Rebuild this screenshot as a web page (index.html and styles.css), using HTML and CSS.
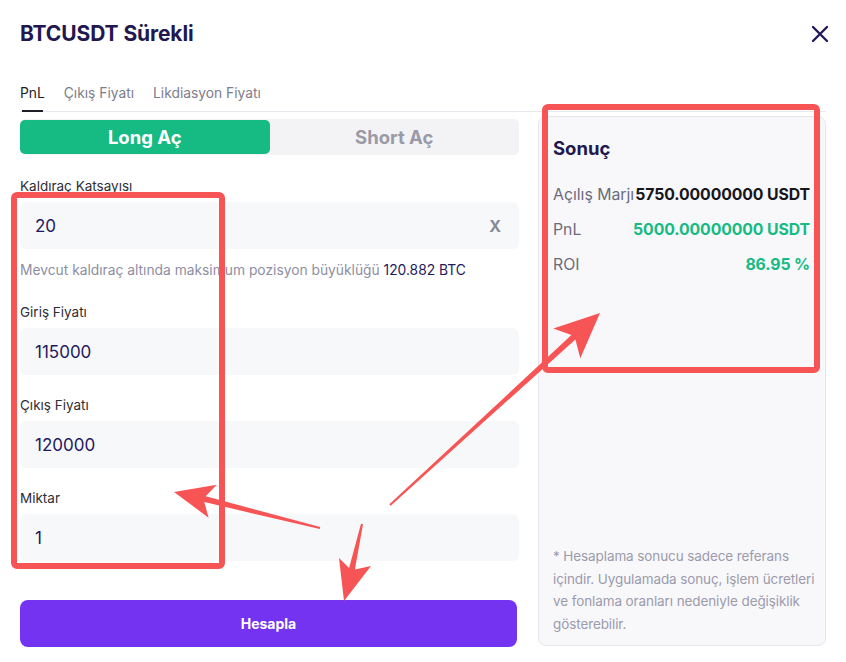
FILE: index.html
```html
<!DOCTYPE html>
<html lang="tr">
<head>
<meta charset="utf-8">
<title>BTCUSDT Sürekli</title>
<link rel="stylesheet" href="styles.css">
</head>
<body>
<div class="modal">
  <header class="head">
    <h1 class="title">BTCUSDT Sürekli</h1>
    <svg class="close" width="18" height="18" viewBox="0 0 18 18"><path d="M2 2L16 16M16 2L2 16" stroke="#23195a" stroke-width="2.4" stroke-linecap="round"/></svg>
  </header>
  <nav class="tabs">
    <span class="tab active">PnL</span>
    <span class="tab">Çıkış Fiyatı</span>
    <span class="tab">Likdiasyon Fiyatı</span>
  </nav>
  <div class="body">
    <div class="form">
      <div class="seg">
        <div class="seg-btn on">Long Aç</div>
        <div class="seg-btn">Short Aç</div>
      </div>
      <div class="label first">Kaldıraç Katsayısı</div>
      <div class="input"><span>20</span><span class="x">X</span></div>
      <div class="hint">Mevcut kaldıraç altında maksimum pozisyon büyüklüğü <span class="hint-v">120.882 BTC</span></div>
      <div class="label">Giriş Fiyatı</div>
      <div class="input"><span>115000</span></div>
      <div class="label">Çıkış Fiyatı</div>
      <div class="input"><span>120000</span></div>
      <div class="label">Miktar</div>
      <div class="input"><span>1</span></div>
      <button class="calc">Hesapla</button>
    </div>
    <aside class="result">
      <div class="r-title">Sonuç</div>
      <div class="row first"><span class="k">Açılış Marjı</span><span class="v">5750.00000000 USDT</span></div>
      <div class="row"><span class="k">PnL</span><span class="v green">5000.00000000 USDT</span></div>
      <div class="row"><span class="k">ROI</span><span class="v green">86.95 %</span></div>
      <p class="note">* Hesaplama sonucu sadece referans içindir. Uygulamada sonuç, işlem ücretleri ve fonlama oranları nedeniyle değişiklik gösterebilir.</p>
    </aside>
  </div>
</div>
<svg class="marks" width="846" height="662" viewBox="0 0 846 662">
  <rect x="14" y="195" width="208" height="371" rx="3" fill="none" stroke="#f75555" stroke-width="6"/>
  <rect x="545" y="107" width="272" height="263" rx="3" fill="none" stroke="#f75555" stroke-width="6"/>
  <polygon fill="#f75555" points="390.7,505.7 575.4,339.5 580.3,358.2 600,313 553.3,328.6 571.4,335.1 389.3,504.3"/>
  <polygon fill="#f75555" points="320.2,527 205.7,496.3 216.8,484.7 174,492 208.6,517.7 204.3,502.1 319.8,529"/>
  <polygon fill="#f75555" points="361,523.8 349.1,568.1 339,558 344,601 371,566 354.9,569.5 363,524.2"/>
</svg>
</body>
</html>
```
FILE: styles.css
```css
* { box-sizing: border-box; }
html, body { margin: 0; padding: 0; }
body {
  width: 846px;
  height: 662px;
  background: #ffffff;
  font-family: Inter, "Noto Sans", sans-serif;
  color: #23195a;
  position: relative;
  overflow: hidden;
}
.modal { padding: 0 20px; }
.head {
  display: flex;
  justify-content: space-between;
  align-items: center;
  height: 66px;
  padding-top: 1px;
}
.title {
  margin: 0;
  font-size: 21px;
  font-weight: 700;
  color: #22184f;
  letter-spacing: -0.1px;
}
.close { margin-right: -3px; }
.tabs {
  display: flex;
  gap: 19px;
  height: 46px;
  align-items: flex-end;
  border-bottom: 1px solid #e8e8ee;
}
.tab {
  font-size: 13.8px;
  color: #7d7d8c;
  line-height: 18px;
  padding-bottom: 9px;
  position: relative;
}
.tab.active { color: #1e1e28; }
.tab.active::after {
  content: "";
  position: absolute;
  left: 2px;
  right: 2px;
  bottom: -1px;
  height: 2px;
  background: #1e1e28;
}
.body {
  display: flex;
  gap: 19px;
  padding-top: 4px;
}
.form { width: 499px; display: flex; flex-direction: column; padding-top: 3px; }
.seg {
  display: flex;
  height: 36px;
  background: #f3f3f6;
  border-radius: 5px;
}
.seg-btn {
  flex: 1;
  display: flex;
  align-items: center;
  justify-content: center;
  font-size: 18.5px;
  font-weight: 700;
  color: #9a9aa6;
  border-radius: 5px;
}
.seg-btn.on { background: #16ba83; color: #ffffff; margin: 1px 0; }
.label {
  font-size: 13.5px;
  color: #2e2e36;
  line-height: 20px;
  margin-top: 20px;
  margin-bottom: 6px;
}
.label.first { margin-top: 21px; }
.input {
  height: 47px;
  background: #f7f8fa;
  border-radius: 6px;
  display: flex;
  align-items: center;
  justify-content: space-between;
  padding: 0 18px 0 15px;
  font-size: 17px;
  color: #1f1860;
}
.x { font-weight: 700; color: #8a8a96; font-size: 16px; }
.hint {
  font-size: 13.8px;
  color: #8e8ea2;
  line-height: 20px;
  margin-top: 11px;
  margin-bottom: 2px;
}
.hint-v { color: #23195a; }
.calc {
  margin-top: 39px;
  height: 47px;
  border: 0;
  border-radius: 8px;
  background: #7433f0;
  color: #ffffff;
  font-family: inherit;
  font-size: 14px;
  font-weight: 700;
  width: 497px;
}
.result {
  width: 288px;
  height: 530px;
  background: #f8f8fb;
  border: 1px solid #e6e6ee;
  border-radius: 8px;
  padding: 19px 15px 10px 14px;
  display: flex;
  flex-direction: column;
}
.r-title {
  font-size: 18.5px;
  font-weight: 700;
  color: #22184f;
  line-height: 24px;
}
.row {
  display: flex;
  justify-content: space-between;
  align-items: center;
  line-height: 20px;
  margin-top: 15px;
  font-size: 15.8px;
  white-space: nowrap;
}
.row.first { margin-top: 25px; }
.k { color: #6b6b7a; }
.v { font-weight: 700; color: #16161c; letter-spacing: -0.1px; }
.v.green { color: #16ba83; }
.note {
  margin: auto -14px 0 0;
  font-size: 13.5px;
  line-height: 22.5px;
  color: #9b9bac;
  letter-spacing: -0.1px;
}
.marks { position: absolute; left: 0; top: 0; pointer-events: none; }
```
